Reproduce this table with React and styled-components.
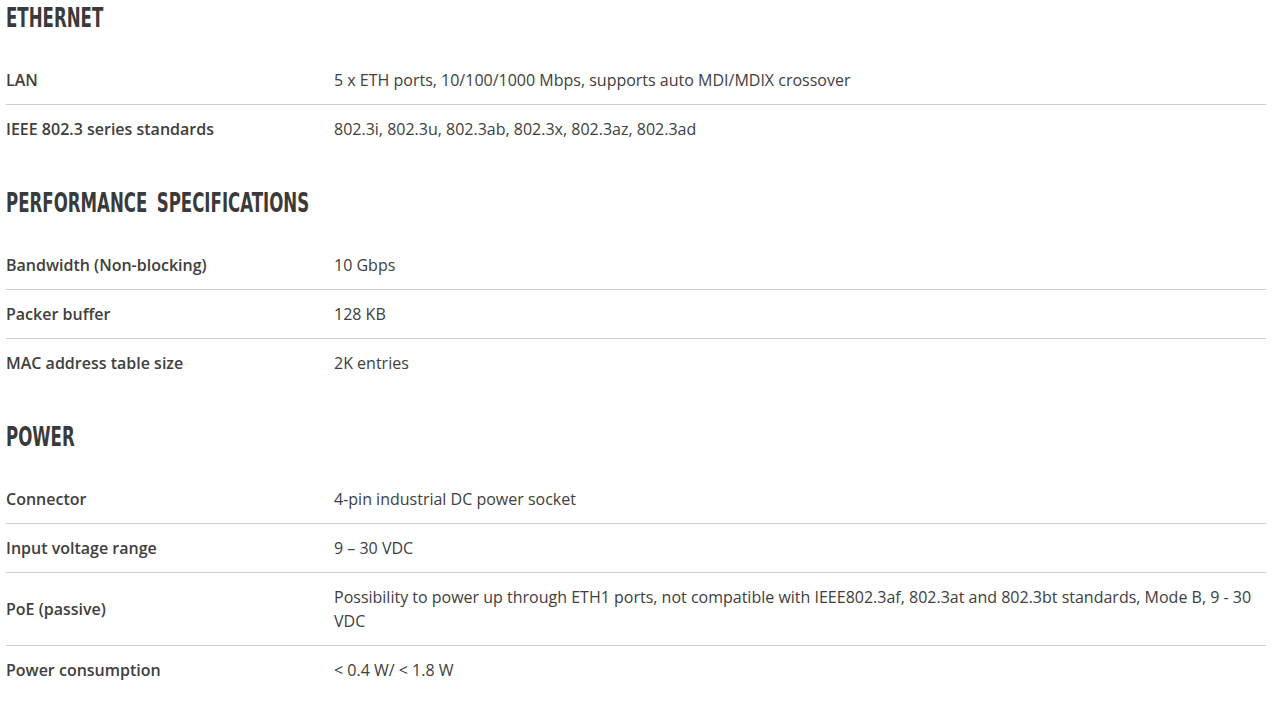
import styled, { createGlobalStyle } from 'styled-components';

const GlobalStyle = createGlobalStyle`
  body {
    margin: 0;
    background: #fff;
    font-family: 'Open Sans', 'Noto Sans', sans-serif;
    color: #404040;
  }
`;

const sections = [
  {
    title: 'ETHERNET',
    rows: [
      ['LAN', '5 x ETH ports, 10/100/1000 Mbps, supports auto MDI/MDIX crossover'],
      ['IEEE 802.3 series standards', '802.3i, 802.3u, 802.3ab, 802.3x, 802.3az, 802.3ad'],
    ],
  },
  {
    title: 'PERFORMANCE SPECIFICATIONS',
    rows: [
      ['Bandwidth (Non-blocking)', '10 Gbps'],
      ['Packer buffer', '128 KB'],
      ['MAC address table size', '2K entries'],
    ],
  },
  {
    title: 'POWER',
    rows: [
      ['Connector', '4-pin industrial DC power socket'],
      ['Input voltage range', '9 – 30 VDC'],
      [
        'PoE (passive)',
        'Possibility to power up through ETH1 ports, not compatible with IEEE802.3af, 802.3at and 802.3bt standards, Mode B, 9 - 30 VDC',
      ],
      ['Power consumption', '< 0.4 W/ < 1.8 W'],
    ],
  },
];

export default function App() {
  return (
    <>
      <GlobalStyle />
      <Page>
        {sections.map((section) => (
          <Section key={section.title}>
            <Heading>{section.title}</Heading>
            <Table>
              {section.rows.map(([label, value]) => (
                <Row key={label}>
                  <Label>{label}</Label>
                  <Value>{value}</Value>
                </Row>
              ))}
            </Table>
          </Section>
        ))}
      </Page>
    </>
  );
}

const Page = styled.div`
  padding: 0 6px;
  display: flex;
  flex-direction: column;
  gap: 32px;
`;

const Section = styled.section`
  display: flex;
  flex-direction: column;
`;

const Heading = styled.h2`
  margin: 0 0 20px;
  height: 36px;
  line-height: 36px;
  font-family: 'DejaVu Sans Condensed', 'DejaVu Sans', sans-serif;
  font-weight: 700;
  font-size: 26px;
  color: #3a3a3a;
  word-spacing: 5px;
  transform: scaleX(0.71);
  transform-origin: left center;
  white-space: nowrap;
`;

const Table = styled.div`
  display: flex;
  flex-direction: column;
`;

const Row = styled.div`
  display: grid;
  grid-template-columns: 328px 1fr;
  align-items: center;
  padding: 12px 0;
  font-size: 16px;
  line-height: 24px;
  border-bottom: 1px solid #cccccc;

  &:last-child {
    border-bottom: none;
  }
`;

const Label = styled.div`
  font-weight: 600;
`;

const Value = styled.div`
  font-weight: 400;
`;
